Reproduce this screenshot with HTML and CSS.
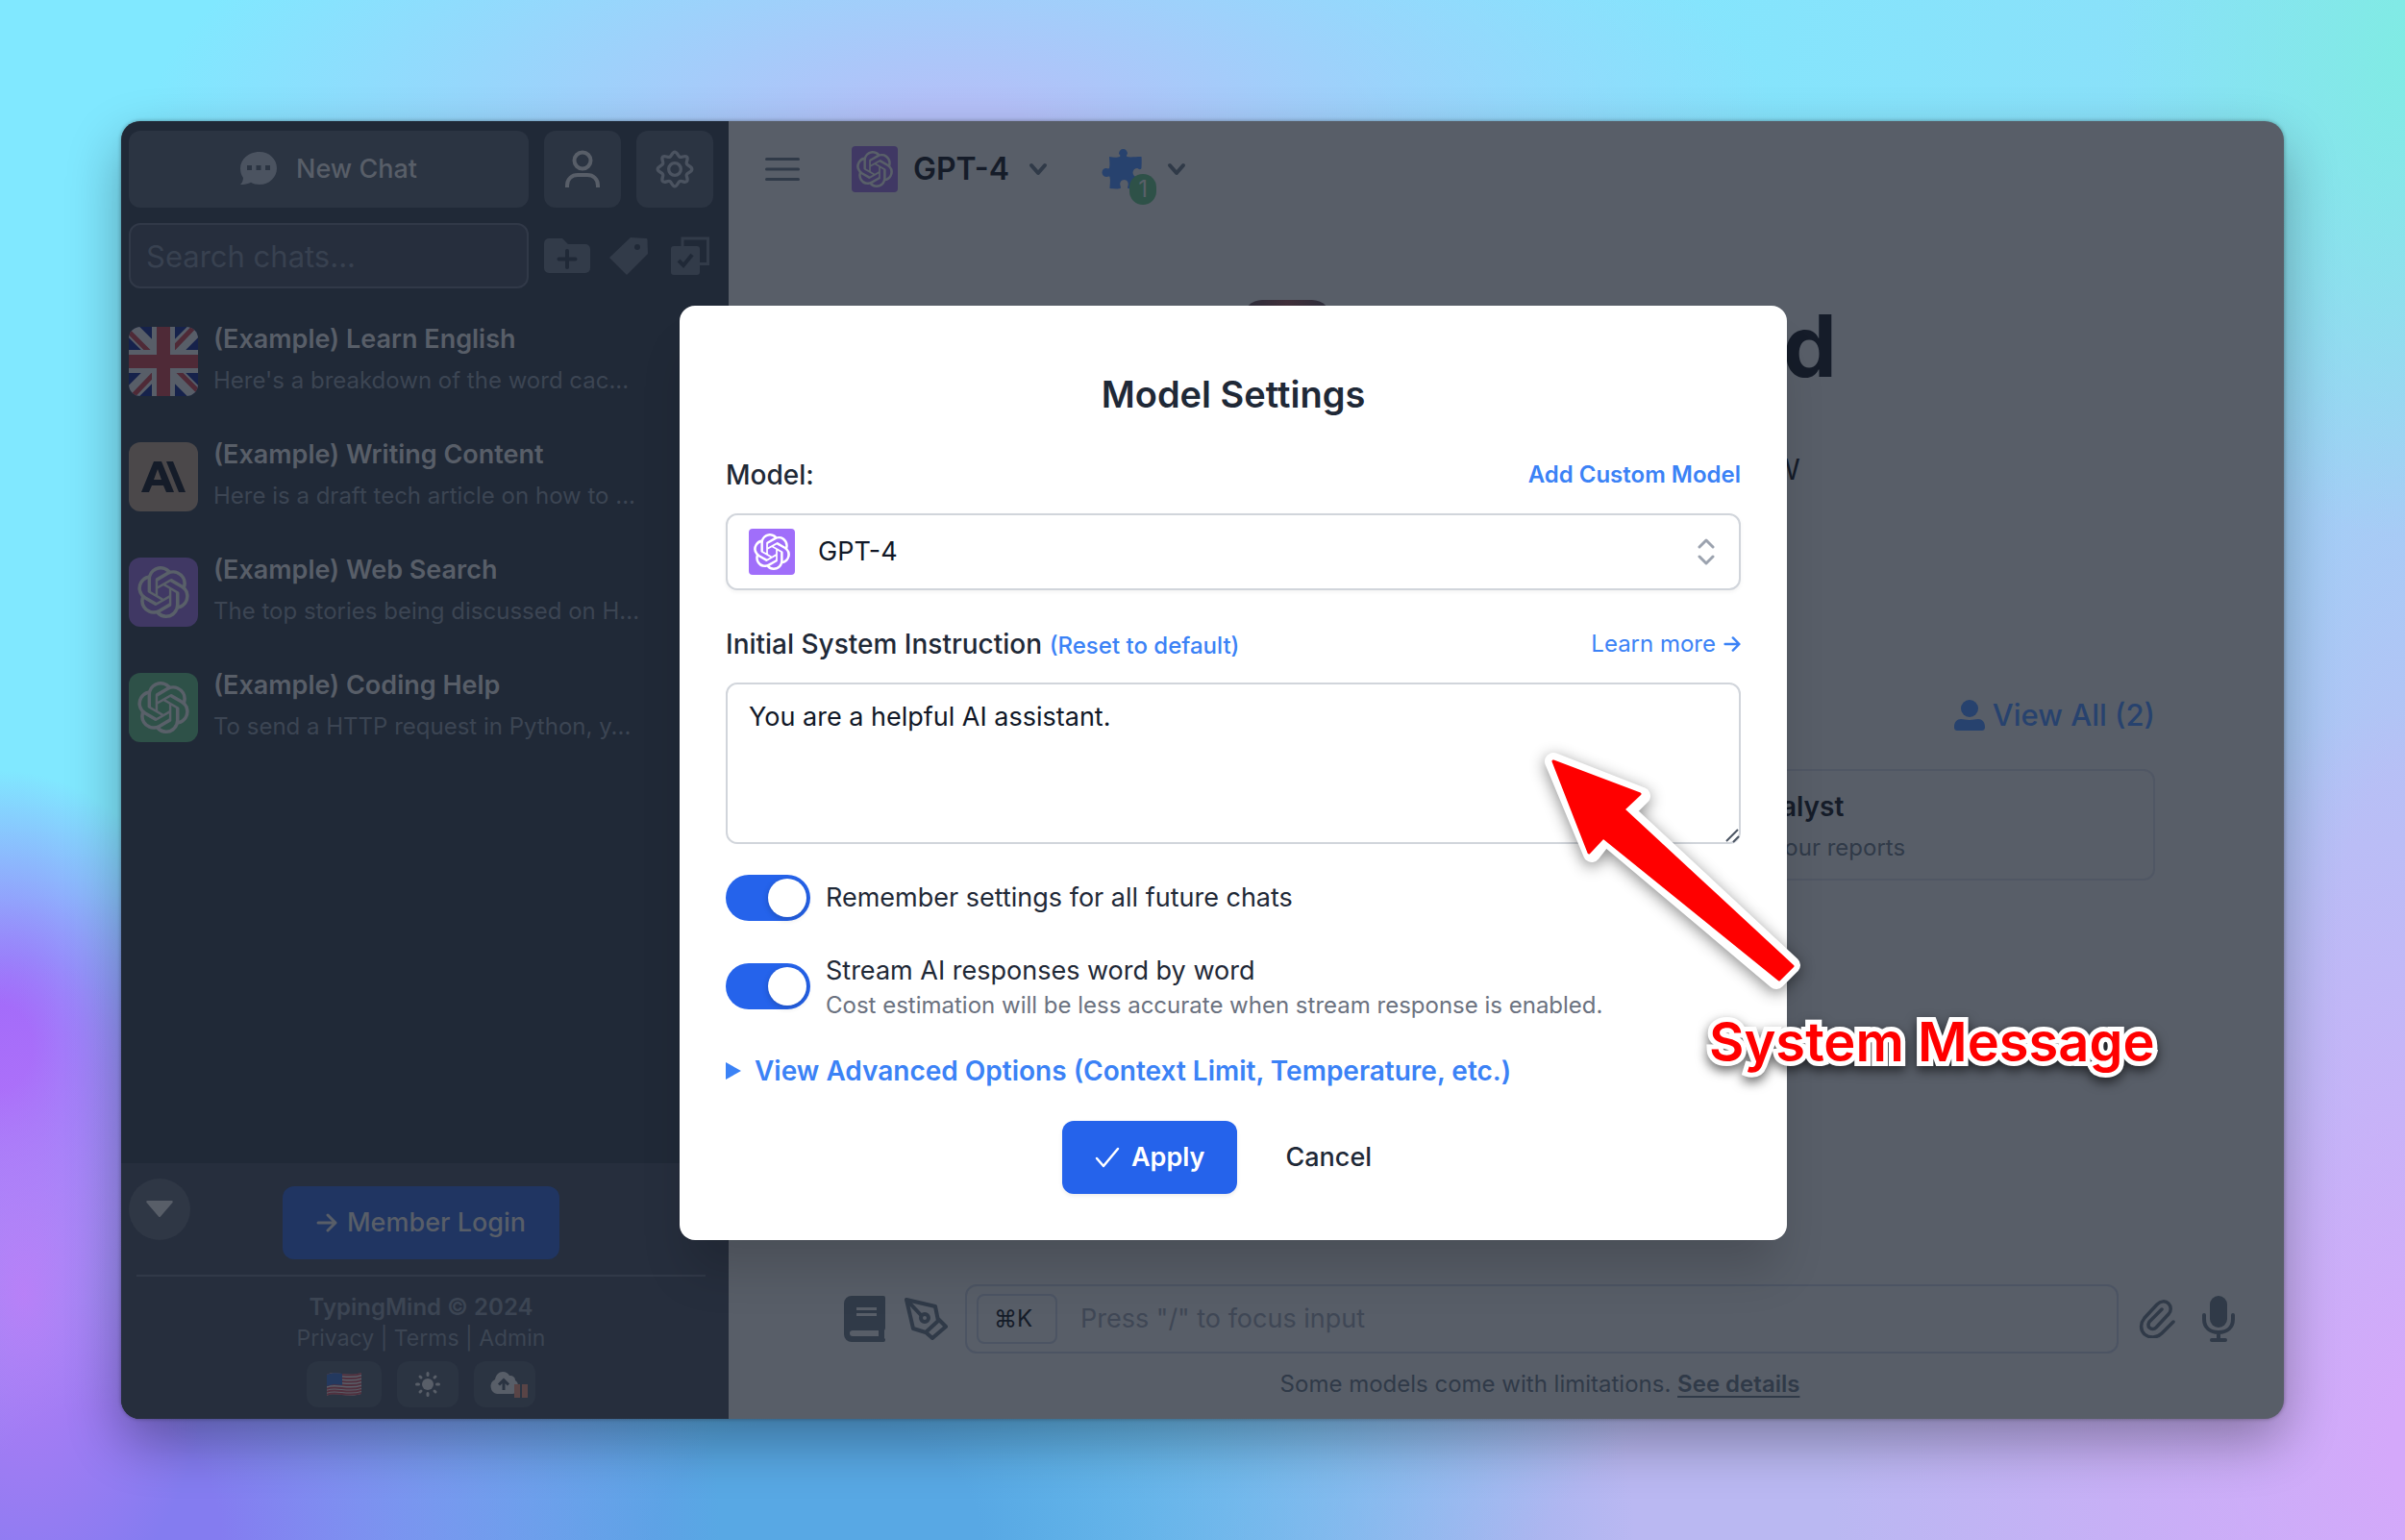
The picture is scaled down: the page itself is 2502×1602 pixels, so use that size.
FILE: index.html
```html
<!DOCTYPE html>
<html lang="en">
<head>
<meta charset="utf-8">
<title>TypingMind</title>
<link rel="stylesheet" href="styles.css">
</head>
<body>
<svg width="0" height="0" class="defs" aria-hidden="true">
  <symbol id="openai" viewBox="0 0 24 24"><path fill="currentColor" d="M22.2819 9.8211a5.9847 5.9847 0 0 0-.5157-4.9108 6.0462 6.0462 0 0 0-6.5098-2.9A6.0651 6.0651 0 0 0 4.9807 4.1818a5.9847 5.9847 0 0 0-3.9977 2.9 6.0462 6.0462 0 0 0 .7427 7.0966 5.98 5.98 0 0 0 .511 4.9107 6.051 6.051 0 0 0 6.5146 2.9001A5.9847 5.9847 0 0 0 13.2599 24a6.0557 6.0557 0 0 0 5.7718-4.2058 5.9894 5.9894 0 0 0 3.9977-2.9001 6.0557 6.0557 0 0 0-.7475-7.0729zm-9.022 12.6081a4.4755 4.4755 0 0 1-2.8764-1.0408l.1419-.0804 4.7783-2.7582a.7948.7948 0 0 0 .3927-.6813v-6.7369l2.02 1.1686a.071.071 0 0 1 .038.052v5.5826a4.504 4.504 0 0 1-4.4945 4.4944zm-9.6607-4.1254a4.4708 4.4708 0 0 1-.5346-3.0137l.142.0852 4.783 2.7582a.7712.7712 0 0 0 .7806 0l5.8428-3.3685v2.3324a.0804.0804 0 0 1-.0332.0615L9.74 19.9502a4.4992 4.4992 0 0 1-6.1408-1.6464zM2.3408 7.8956a4.485 4.485 0 0 1 2.3655-1.9728V11.6a.7664.7664 0 0 0 .3879.6765l5.8144 3.3543-2.0201 1.1685a.0757.0757 0 0 1-.071 0l-4.8303-2.7865A4.504 4.504 0 0 1 2.3408 7.872zm16.5963 3.8558L13.1038 8.364 15.1192 7.2a.0757.0757 0 0 1 .071 0l4.8303 2.7913a4.4944 4.4944 0 0 1-.6765 8.1042v-5.6772a.79.79 0 0 0-.407-.667zm2.0107-3.0231l-.142-.0852-4.7735-2.7818a.7759.7759 0 0 0-.7854 0L9.409 9.2297V6.8974a.0662.0662 0 0 1 .0284-.0615l4.8303-2.7866a4.4992 4.4992 0 0 1 6.6802 4.66zM8.3065 12.863l-2.02-1.1638a.0804.0804 0 0 1-.038-.0567V6.0742a4.4992 4.4992 0 0 1 7.3757-3.4537l-.142.0805L8.704 5.459a.7948.7948 0 0 0-.3927.6813zm1.0976-2.3654l2.602-1.4998 2.6069 1.4998v2.9994l-2.5974 1.4997-2.6067-1.4997Z"/></symbol>
  <symbol id="chevron" viewBox="0 0 20 14"><path d="M3 3l7 8 7-8" fill="none" stroke="currentColor" stroke-width="4" stroke-linecap="round" stroke-linejoin="round"/></symbol>
  <symbol id="arrow" viewBox="0 0 22 22"><path d="M2 11h18M12 3l8 8-8 8" fill="none" stroke="currentColor" stroke-width="3" stroke-linecap="round" stroke-linejoin="round"/></symbol>
</svg>

<div class="window">
  <aside class="sidebar">
    <div class="top-row">
      <button class="tile new-chat" type="button">
        <svg width="38" height="36" viewBox="0 0 38 36"><path fill="currentColor" d="M20 0C30 0 38 7.500 38 17S30 34 20 34c-3.500 0-6.500-.8-9-2.200C8 33.500 4 34 0 34c2-2 3-4.500 3-7C1 24 0 21 0 17 0 7.500 9 0 20 0z"/><path fill="#2b3442" d="M7 14h5v5H7zM16.500 14h5v5h-5zM26 14h5v5h-5z"/></svg>
        New Chat
      </button>
      <button class="tile square" type="button" aria-label="Account">
        <svg width="36" height="40" viewBox="0 0 36 40"><g fill="none" stroke="currentColor" stroke-width="4"><circle cx="18" cy="11" r="8.500"/><path d="M2 39v-2c0-7 5-11 11-11h10c6 0 11 4 11 11v2"/></g></svg>
      </button>
      <button class="tile square dim" type="button" aria-label="Settings">
        <svg width="40" height="40" viewBox="0 0 24 24"><path fill="none" stroke="currentColor" stroke-width="2" stroke-linejoin="round" d="M12 1.300c1.700 0 1.900 2.600 3.200 3.100s3.100-1.300 4.300-.1-.6 3-.1 4.300 3.300 1.500 3.300 3.400-2.800 2-3.300 3.300 1.300 3.100.1 4.300-3-.6-4.300-.1-1.500 3.200-3.200 3.200-1.900-2.700-3.200-3.200-3.100 1.300-4.300.1.600-3 .1-4.300S1.300 13.700 1.300 12s2.800-2.100 3.300-3.400-1.300-3.100-.1-4.300 3 .6 4.300.1S10.300 1.300 12 1.300z"/><circle cx="12" cy="12" r="3.800" fill="none" stroke="currentColor" stroke-width="2"/></svg>
      </button>
    </div>
    <div class="search-row">
      <input class="search" type="text" placeholder="Search chats..." aria-label="Search chats">
      <button class="tool wide" type="button" aria-label="New folder"><svg width="48" height="36" viewBox="0 0 48 36"><path fill="currentColor" d="M5 0h14l6 6h18a5 5 0 0 1 5 5v20a5 5 0 0 1-5 5H5a5 5 0 0 1-5-5V5a5 5 0 0 1 5-5z"/><path d="M24 13v17M15.500 21.500h17" stroke="#202937" stroke-width="4" stroke-linecap="round"/></svg></button>
      <button class="tool" type="button" aria-label="Tags"><svg width="40" height="40" viewBox="0 0 40 40"><path fill="currentColor" d="M22 1l16 1c1 0 1.500.5 1.500 1.500L40 18 18 40 0 22z"/><circle cx="29" cy="11" r="3" fill="#202937"/></svg></button>
      <button class="tool" type="button" aria-label="Select chats"><svg width="40" height="40" viewBox="0 0 40 40"><path fill="none" stroke="currentColor" stroke-width="3" d="M12 10V2h26.500v26.500H30"/><rect y="10" width="30" height="30" rx="3" fill="currentColor"/><path d="M8 25l5 5 9-11" fill="none" stroke="#202937" stroke-width="4"/></svg></button>
    </div>
    <nav class="chats">
      <a class="chat" href="#english">
        <svg class="avatar" viewBox="0 0 72 72"><path fill="#16224b" d="M0 0h72v72H0z"/><path d="M0 0l72 72M72 0L0 72" stroke="#585e68" stroke-width="16"/><path d="M0 5l26 26M72 67L46 41M68 0L44 25M4 72l24-25" stroke="#4f2a37" stroke-width="5"/><path d="M36 0v72M0 36h72" stroke="#585e68" stroke-width="24"/><path d="M36 0v72M0 36h72" stroke="#4f2a37" stroke-width="14"/></svg>
        <span class="chat-text"><b>(Example) Learn English</b><small>Here's a breakdown of the word cac...</small></span>
      </a>
      <a class="chat" href="#writing">
        <svg class="avatar sand" viewBox="0 0 72 72"><path fill="#151c29" fill-rule="evenodd" d="M26 20h8l13 32h-8l-3-7H24l-3 7h-8zm0 19h8l-4-11zM39 20h7l13 32h-7z"/></svg>
        <span class="chat-text"><b>(Example) Writing Content</b><small>Here is a draft tech article on how to ...</small></span>
      </a>
      <a class="chat" href="#web">
        <svg class="avatar violet"><use href="#openai" x="9" y="9" width="54" height="54"/></svg>
        <span class="chat-text"><b>(Example) Web Search</b><small>The top stories being discussed on H...</small></span>
      </a>
      <a class="chat" href="#coding">
        <svg class="avatar green"><use href="#openai" x="9" y="9" width="54" height="54"/></svg>
        <span class="chat-text"><b>(Example) Coding Help</b><small>To send a HTTP request in Python, y...</small></span>
      </a>
    </nav>
    <footer class="side-foot">
      <button class="collapse" type="button" aria-label="Collapse"><svg width="28" height="18" viewBox="0 0 28 18"><path fill="currentColor" d="M1.500 0h25c1 0 1.500 1 1 2L15 16.500c-.6.700-1.400.700-2 0L.5 2c-.6-1 0-2 1-2z"/></svg></button>
      <button class="login" type="button"><svg width="22" height="22"><use href="#arrow"/></svg>Member Login</button>
      <div class="rule"></div>
      <strong class="brand">TypingMind © 2024</strong>
      <div class="links"><a href="#privacy">Privacy</a> | <a href="#terms">Terms</a> | <a href="#admin">Admin</a></div>
      <div class="chips">
        <button class="chip lang" type="button" aria-label="Language"><svg width="36" height="26" viewBox="0 0 36 26"><path fill="#5a5f69" d="M0 3c8-5 22 3 36-2v22c-14 5-28-3-36 2z"/><path fill="none" stroke="#50303e" stroke-width="2" d="M0 4c8-5 22 3 36-2M0 7.500c8-5 22 3 36-2M0 11c8-5 22 3 36-2M0 14.500c8-5 22 3 36-2M0 18c8-5 22 3 36-2M0 21c8-5 22 3 36-2M0 24c8-5 22 3 36-2"/><path fill="#23395f" d="M0 3c5-2 10-2 16-1v12c-6-1-11-1-16 1z"/></svg></button>
        <button class="chip" type="button" aria-label="Theme"><svg width="26" height="26" viewBox="0 0 26 26"><circle cx="13" cy="13" r="6" fill="currentColor"/><path d="M13 1.500v2M13 22.500v2M1.500 13h2M22.500 13h2M5 5l1 1M20 20l1 1M5 21l1-1M20 6l1-1" stroke="currentColor" stroke-width="3" stroke-linecap="round"/></svg></button>
        <button class="chip sync" type="button" aria-label="Sync"><svg width="40" height="28" viewBox="0 0 40 28"><path fill="currentColor" d="M8 24a8 8 0 0 1-2-15C7 4 10 1 14 1c3.500 0 6 2 7 4 4 0 6 2 6 5 2 1 3 3 3 6 0 4-2 8-6 8z"/><path d="M15 20V11M10 14.500l5-5 5 5" fill="none" stroke="#2b3442" stroke-width="3"/><path fill="#594446" d="M26 14h6v14h-6zM34 14h6v14h-6z"/></svg></button>
      </div>
    </footer>
  </aside>

  <main class="main">
    <header class="bar">
      <button class="plain menu" type="button" aria-label="Menu"><svg width="36" height="24" viewBox="0 0 36 24"><path d="M1.500 1.500h33M1.500 12h33M1.500 22.500h33" stroke="currentColor" stroke-width="3" stroke-linecap="round"/></svg></button>
      <button class="plain model" type="button">
        <svg class="badge violet" viewBox="0 0 48 48"><use href="#openai" x="5" y="5" width="38" height="38"/></svg>
        GPT-4
        <svg class="chev" width="20" height="14"><use href="#chevron"/></svg>
      </button>
      <button class="plain plugins" type="button" aria-label="Plugins">
        <span class="puzzle">
          <svg width="42" height="42" viewBox="0 0 42 42"><path fill="#27426e" d="M8 8c4 1 9 1 11 0 1-1 0-2-1-3 0-3 2-5 4.500-5S27 2 27 5c-1 1-1.500 2-.5 3 3 1 9 0 15 0 .5 4 0 9 0 12-1 2-3 1-4 0-3 0-5 2-5 4.500s2 4.500 4 4.500c2-1 3-1 4 0 1 4 0 8 0 12-4 1-9 1-13 0-1-1 0-2 0-3 1-3-1-6-4-6s-5 3-4 6c0 1 1 2 0 3-3 1-7 0-11 0 0-4 1-8 0-12-1-1-2 0-3 0-3 0-5-2-5-4.500S2 20 5 20c1 0 2 1 3 0 1-4 0-8 0-12z"/></svg>
          <span class="count">1</span>
        </span>
        <svg class="chev" width="20" height="14"><use href="#chevron"/></svg>
      </button>
    </header>
    <section class="home">
      <div class="hero"><span class="logo"></span><h1>TypingMind</h1></div>
      <p class="tagline">Better way to chat with AI for all, NOW</p>
      <div class="agents-head"><a href="#agents"><svg width="32" height="32" viewBox="0 0 32 32"><ellipse cx="16" cy="9" rx="9" ry="9" fill="currentColor"/><path fill="currentColor" d="M0 28c0-5 3-8 7-8 3 0 5 1 9 1s6-1 9-1c4 0 7 3 7 8 0 3-1 4-4 4H4c-3 0-4-1-4-4z"/></svg>View All (2)</a></div>
      <div class="agents">
        <span></span>
        <a class="agent" href="#analyst"><b>Data Analyst</b><small>Analyze your reports</small></a>
      </div>
    </section>
    <div class="composer">
      <button class="plain ico" type="button" aria-label="Prompt library"><svg width="44" height="48" viewBox="0 0 44 48"><path fill="currentColor" fill-rule="evenodd" d="M8 0h33a2 2 0 0 1 2 2v32l-1 2v8l1 1v1a2 2 0 0 1-2 2H8a8 8 0 0 1-8-8V8a8 8 0 0 1 8-8zm5 12v3h21v-3zm0 6v3h21v-3zM9 36a3 3 0 0 0 0 6h27v-6z"/></svg></button>
      <button class="plain ico" type="button" aria-label="Characters"><svg width="46" height="46" viewBox="0 0 46 46"><g fill="none" stroke="currentColor" stroke-width="4" stroke-linejoin="round"><path d="M2 3l30 7 3 15-13 12-13-4zM2 3l16 17M35 23l8 8-14 12-8-7"/><circle cx="21" cy="22" r="4"/></g></svg></button>
      <div class="prompt"><kbd>⌘K</kbd><input type="text" placeholder="Press &quot;/&quot; to focus input" aria-label="Message"></div>
      <button class="plain ico" type="button" aria-label="Attach"><svg width="38" height="40" viewBox="0 0 38 40"><path d="M36 23L24 35c-5 5-13 5-18 1-5-5-4-12 0-17L19 5c4-4 9-4 12-1s3 8 0 11L18 29c-2 2-5 2-7 0s-1-4 0-6L24 10" fill="none" stroke="currentColor" stroke-width="3.500" stroke-linecap="round"/></svg></button>
      <button class="plain ico" type="button" aria-label="Voice"><svg width="34" height="48" viewBox="0 0 34 48"><rect x="8" width="18" height="33" rx="9" fill="currentColor"/><path d="M2 20v4c0 9 6 14 15 14s15-5 15-14v-4M17 38v8" fill="none" stroke="currentColor" stroke-width="4" stroke-linecap="round"/><rect x="8" y="44" width="18" height="4" rx="2" fill="currentColor"/></svg></button>
    </div>
    <p class="limits">Some models come with limitations. <a href="#details">See details</a></p>
  </main>

  <div class="overlay">
    <form class="modal" role="dialog" aria-labelledby="modal-title">
      <h2 id="modal-title">Model Settings</h2>
      <div class="row">
        <label for="model">Model:</label>
        <a class="strong" href="#custom">Add Custom Model</a>
      </div>
      <div class="select-wrap">
        <select id="model"><option>GPT-4</option></select>
        <svg class="badge purple" viewBox="0 0 48 48"><use href="#openai" x="5" y="5" width="38" height="38"/></svg>
        <svg class="updown" width="18" height="28" viewBox="0 0 18 28"><path d="M2 9l7-7 7 7M2 19l7 7 7-7" fill="none" stroke="#9ca3af" stroke-width="3" stroke-linecap="round" stroke-linejoin="round"/></svg>
      </div>
      <div class="row">
        <span><label for="system">Initial System Instruction</label> <a class="reset" href="#reset">(Reset to default)</a></span>
        <a href="#learn">Learn more <svg width="18" height="18"><use href="#arrow"/></svg></a>
      </div>
      <div class="area-wrap">
        <textarea id="system">You are a helpful AI assistant.</textarea>
        <svg class="grip" width="16" height="16" viewBox="0 0 16 16"><path d="M2 14L14 2M9 15l6-6" stroke="#4b5563" stroke-width="2"/></svg>
      </div>
      <div class="switch-row"><input class="switch" type="checkbox" id="remember" checked><label for="remember">Remember settings for all future chats</label></div>
      <div class="switch-row"><input class="switch" type="checkbox" id="stream" checked><label for="stream">Stream AI responses word by word<small>Cost estimation will be less accurate when stream response is enabled.</small></label></div>
      <details><summary><svg width="16" height="18" viewBox="0 0 16 18"><path fill="currentColor" d="M0 0l16 9-16 9z"/></svg>View Advanced Options (Context Limit, Temperature, etc.)</summary></details>
      <div class="actions">
        <button class="apply" type="button"><svg width="26" height="22" viewBox="0 0 26 22"><path d="M2 12l7 8L24 2" fill="none" stroke="currentColor" stroke-width="2.500" stroke-linecap="round" stroke-linejoin="round"/></svg>Apply</button>
        <button class="cancel" type="button">Cancel</button>
      </div>
    </form>
  </div>

  <div class="note">
    <svg class="note-arrow" width="272" height="244" viewBox="0 0 272 244"><path d="M10 10L102 46 86 62 258 222 242 238 64 88 50 106z" fill="#fff" stroke="#fff" stroke-width="18" stroke-linejoin="round"/><path d="M10 10L100 44 83 60 259 223 245 237 62 89 47 105z" fill="#f00" stroke="#f00" stroke-width="3" stroke-linejoin="round"/></svg>
    <span class="note-text">System Message</span>
  </div>
</div>
</body>
</html>
```
FILE: styles.css
```css
* { box-sizing: border-box; }

body {
  margin: 0;
  padding: 126px;
  min-height: 100vh;
  font-family: Inter, "Liberation Sans", sans-serif;
  font-size: 27px;
  line-height: 40px;
  color: #1f2937;
  background:
    radial-gradient(ellipse 8% 22% at 1% 84%, rgba(196, 124, 248, .8) 0%, rgba(196, 124, 248, 0) 100%),
    radial-gradient(ellipse 9% 18% at 0% 68%, #a06afa 15%, rgba(160, 106, 250, 0) 100%),
    radial-gradient(ellipse 26% 42% at 4% 100%, #847cf0 20%, rgba(132, 124, 240, 0) 100%),
    radial-gradient(ellipse 34% 40% at 34% 100%, #58a8e4 20%, rgba(88, 168, 228, 0) 100%),
    radial-gradient(ellipse 26% 48% at 102% 94%, #d4a8fa 10%, rgba(212, 168, 250, 0) 100%),
    radial-gradient(ellipse 38% 40% at 78% 106%, #bab8f2 40%, rgba(186, 184, 242, 0) 100%),
    radial-gradient(ellipse 12% 32% at 100% 3%, #80ebe4 0%, rgba(128, 235, 228, 0) 100%),
    radial-gradient(ellipse 34% 22% at 40% 9%, #b4c0f8 10%, rgba(180, 192, 248, 0) 100%),
    radial-gradient(ellipse 14% 60% at 100% 62%, #b4c2f5 20%, rgba(180, 194, 245, 0) 100%),
    linear-gradient(100deg, #80e8ff 0%, #80e8ff 50%, #90dcf6 100%);
}

.defs { position: absolute; }
button, input, select, textarea { font: inherit; color: inherit; }
button { border: 0; padding: 0; cursor: pointer; }
a { color: inherit; text-decoration: none; }
svg { display: block; flex: none; }

.window {
  position: relative;
  display: flex;
  min-height: calc(100vh - 252px);
  border-radius: 20px;
  background: #585e68;
  box-shadow: 0 0 4px rgba(0, 0, 0, .35), 0 24px 56px rgba(0, 0, 0, .32);
}

/* Sidebar */
.sidebar {
  display: flex;
  flex-direction: column;
  flex: 0 0 632px;
  overflow: hidden;
  border-radius: 20px 0 0 20px;
  background: #202937;
  color: #585e68;
}
.top-row, .search-row { display: flex; align-items: center; gap: 16px; padding: 10px 16px 0 8px; }
.search-row { padding-top: 16px; }
.tile {
  display: flex;
  align-items: center;
  justify-content: center;
  gap: 20px;
  height: 80px;
  border-radius: 12px;
  background: #2b3442;
  font-weight: 500;
}
.new-chat { flex: 1; }
.new-chat svg, .dim { color: #4b5360; }
.square { width: 80px; }
.search {
  flex: 1;
  min-width: 0;
  height: 68px;
  padding: 0 16px;
  border: 2px solid #313948;
  border-radius: 12px;
  background: #262e3d;
  font-size: 31px;
}
.search::placeholder { color: #384150; opacity: 1; }
.tool { display: flex; justify-content: center; width: 40px; background: none; color: #323b49; margin-right: 8px; }
.tool:last-child { margin-right: 4px; }
.wide { width: 48px; margin-right: 4px; }

.chats { display: flex; flex-direction: column; gap: 32px; flex: 1; padding: 32px 16px 0 8px; }
.chat { display: flex; align-items: center; gap: 16px; height: 88px; }
.avatar { width: 72px; height: 72px; border-radius: 12px; color: #596069; }
.sand { background: #4b484a; }
.violet { background: #403864; }
.green { background: #2e5148; }
.chat-text { display: flex; flex-direction: column; height: 88px; white-space: nowrap; }
.chat-text b { font-weight: 600; line-height: 42px; }
.chat-text small { font-size: 24px; line-height: 44px; color: #3c4553; }

.side-foot {
  position: relative;
  display: flex;
  flex-direction: column;
  align-items: center;
  padding: 24px 8px 12px 0;
  background: #262e3d;
}
.collapse {
  position: absolute;
  top: 16px;
  left: 8px;
  display: flex;
  align-items: center;
  justify-content: center;
  width: 64px;
  height: 64px;
  border-radius: 50%;
  background: #2f3745;
}
.login {
  display: flex;
  align-items: center;
  gap: 10px;
  height: 76px;
  padding: 0 35px;
  border-radius: 12px;
  background: #203562;
  font-weight: 500;
}
.rule { align-self: stretch; height: 2px; margin: 16px; background: #313948; }
.brand, .links { font-size: 24px; line-height: 32px; color: #3c4553; }
.brand { font-weight: 600; }
.links { font-size: 23px; }
.chips { display: flex; gap: 16px; margin-top: 8px; }
.chip {
  display: flex;
  align-items: center;
  justify-content: center;
  width: 64px;
  height: 48px;
  border-radius: 12px;
  background: #2b3442;
}
.lang { width: 78px; }
.sync { padding-left: 8px; }

/* Main column */
.main { display: flex; flex-direction: column; flex: 1; min-width: 0; color: #151c29; }
.plain { display: flex; align-items: center; background: none; }
.bar { display: flex; align-items: center; height: 80px; margin: 10px 38px 0; color: #303a48; }
.badge { width: 48px; height: 48px; border-radius: 4px; }
.model { gap: 16px; margin-left: 54px; color: #151c29; font-size: 32px; font-weight: 600; }
.model .badge { color: #596069; }
.chev { margin-left: 4px; color: #303a48; }
.plugins { gap: 22px; margin-left: 56px; }
.puzzle { position: relative; }
.count {
  position: absolute;
  left: 29px;
  top: 26px;
  width: 28px;
  height: 32px;
  border-radius: 14px;
  background: #2e5148;
  color: #596069;
  font-size: 24px;
  line-height: 32px;
  text-align: center;
}

.home { flex: 1; padding: 96px 134px 0 204px; }
.hero { display: flex; align-items: center; justify-content: center; gap: 8px; height: 96px; }
.logo { width: 92px; height: 96px; border-radius: 20px; background: linear-gradient(90deg, #2a2c3a, #402e39, #2a2c3a); }
.hero h1 { margin: 0; font-size: 89px; font-weight: 700; line-height: 96px; }
.tagline { margin: 56px 0 208px; font-size: 30px; line-height: 48px; text-align: center; white-space: nowrap; }
.agents-head { display: flex; justify-content: flex-end; }
.agents-head a { display: flex; align-items: center; gap: 8px; color: #27426e; font-size: 31px; font-weight: 500; line-height: 48px; }
.agents { display: grid; grid-template-columns: 1fr 1fr; gap: 24px; margin-top: 32px; }
.agent {
  display: flex;
  flex-direction: column;
  height: 116px;
  padding: 16px 24px 0 130px;
  border: 2px solid #505764;
  border-radius: 12px;
  background: #585e68;
}
.agent b { font-size: 28px; font-weight: 600; line-height: 42px; }
.agent small { font-size: 24px; line-height: 44px; color: #303a48; }

.composer { display: flex; align-items: center; gap: 16px; padding: 0 44px 0 118px; }
.ico { width: 48px; height: 48px; justify-content: center; color: #303a48; }
.prompt {
  display: flex;
  align-items: center;
  flex: 1;
  height: 72px;
  padding-left: 10px;
  border: 2px solid #4c5463;
  border-radius: 12px;
}
.prompt kbd {
  width: 84px;
  height: 52px;
  padding-right: 8px;
  border: 2px solid #4c5463;
  border-radius: 8px;
  font-family: Inter, "DejaVu Sans", sans-serif;
  font-size: 24px;
  line-height: 48px;
  text-align: center;
}
.prompt input { flex: 1; padding: 0 24px; border: 0; background: none; }
.prompt input::placeholder { color: #3f4755; opacity: 1; }
.limits { margin: 14px 0 18px; padding-left: 70px; color: #303a48; font-size: 24px; line-height: 36px; text-align: center; }
.limits a { font-weight: 600; text-decoration: underline; text-decoration-thickness: 2px; text-underline-offset: 4px; }

/* Dialog */
.overlay {
  position: absolute;
  inset: 0;
  display: flex;
  align-items: flex-start;
  justify-content: center;
  padding: 192px 0 0 64px;
}
.modal {
  width: 1152px;
  padding: 64px 48px 48px;
  border-radius: 16px;
  background: #fff;
  box-shadow: 0 40px 50px -10px rgba(0, 0, 0, .16);
}
.modal h2 { margin: 0; font-size: 38px; font-weight: 600; line-height: 56px; text-align: center; }
.row { display: flex; justify-content: space-between; height: 40px; margin: 36px 0 20px; }
.row label { font-size: 28px; font-weight: 500; }
.row a { display: inline-flex; align-items: center; gap: 8px; color: #3b82f6; font-size: 24px; }
.row .strong { font-weight: 600; }
.row .reset { font-weight: 500; }
.select-wrap, .area-wrap { position: relative; color: #111827; }
.select-wrap select {
  display: block;
  width: 100%;
  height: 80px;
  padding: 0 94px;
  appearance: none;
  border: 2px solid #d1d5db;
  border-radius: 12px;
  background: #fff;
  box-shadow: 0 2px 4px rgba(0, 0, 0, .05);
}
.select-wrap .badge { position: absolute; left: 24px; top: 16px; }
.purple { background: #a06efa; color: #fff; }
.updown { position: absolute; right: 27px; top: 26px; }
.area-wrap textarea {
  display: block;
  width: 100%;
  height: 168px;
  padding: 14px 22px;
  resize: none;
  border: 2px solid #d1d5db;
  border-radius: 12px;
}
.grip { position: absolute; right: 1px; bottom: 1px; }
.switch-row { display: flex; align-items: center; gap: 16px; margin-top: 32px; }
.switch-row small { display: block; color: #6b7280; font-size: 24px; line-height: 32px; }
.switch {
  flex: none;
  width: 88px;
  height: 48px;
  margin: 0;
  padding: 4px;
  appearance: none;
  border-radius: 24px;
  background: #2563eb;
}
.switch::before {
  content: "";
  display: block;
  width: 40px;
  height: 40px;
  margin-left: auto;
  border-radius: 50%;
  background: #fff;
  box-shadow: 0 2px 6px rgba(0, 0, 0, .2);
}
details { margin-top: 32px; color: #3b82f6; font-size: 28px; font-weight: 600; }
summary { display: flex; align-items: center; gap: 14px; list-style: none; }
.actions { display: flex; justify-content: center; gap: 16px; margin-top: 32px; }
.actions button { display: flex; align-items: center; gap: 12px; height: 76px; padding: 0 34px; border-radius: 12px; }
.actions .apply { background: #2563eb; color: #fff; font-weight: 600; box-shadow: 0 2px 4px rgba(0, 0, 0, .08); }
.actions .cancel { background: none; font-weight: 500; }

/* Annotation drawn over the window */
.note { position: absolute; left: 1480px; top: 656px; }
.note-arrow { overflow: visible; filter: drop-shadow(0 4px 8px rgba(0, 0, 0, .45)); }
.note-text {
  position: absolute;
  left: 172px;
  top: 266px;
  white-space: nowrap;
  color: #f00;
  font-size: 56px;
  font-weight: 600;
  line-height: 72px;
  -webkit-text-stroke: 10px #fff;
  paint-order: stroke fill;
  filter: drop-shadow(0 5px 6px rgba(0, 0, 0, .6));
}
```
